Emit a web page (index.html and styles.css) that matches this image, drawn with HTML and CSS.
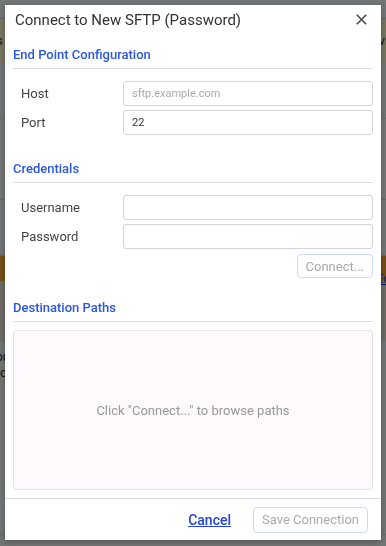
FILE: index.html
```html
<!DOCTYPE html>
<html lang="en">
<head>
    <meta charset="UTF-8">
    <meta name="viewport" content="width=device-width, initial-scale=1.0">
    <title>Connect to New SFTP</title>
    <link rel="stylesheet" href="styles.css">
</head>
<body>

    <!-- Page behind the modal -->
    <div class="page">
        <div class="page-top"></div>
        <div class="page-bar">Connections <span class="page-tab">Activity</span></div>
        <div class="page-row"></div>
        <div class="page-row tall"></div>
        <div class="page-row"></div>
        <div class="page-banner"></div>
        <div class="page-card">
            <a href="#" class="page-link">Edit</a>
        </div>
        <div class="page-text">You Sync<br>cards</div>
        <div class="page-row"></div>
    </div>

    <div class="overlay">
        <div class="dialog">
            <div class="dialog-header">
                <h1>Connect to New SFTP (Password)</h1>
                <button type="button" class="close" aria-label="Close">
                    <svg width="11" height="11" viewBox="0 0 11 11">
                        <path d="M0.8 0.8 L10.2 10.2 M10.2 0.8 L0.8 10.2" stroke="#4a4a4a" stroke-width="1.6" fill="none"/>
                    </svg>
                </button>
            </div>

            <div class="dialog-body">
                <!-- End Point Section -->
                <h2>End Point Configuration</h2>
                <div class="field">
                    <label for="host">Host</label>
                    <input type="text" id="host" placeholder="sftp.example.com">
                </div>
                <div class="field">
                    <label for="port">Port</label>
                    <input type="text" id="port" value="22">
                </div>

                <!-- Credentials Section -->
                <h2 class="gap">Credentials</h2>
                <div class="field">
                    <label for="username">Username</label>
                    <input type="text" id="username">
                </div>
                <div class="field">
                    <label for="password">Password</label>
                    <input type="password" id="password">
                </div>
                <div class="connect-row">
                    <button type="button" class="btn" disabled>Connect...</button>
                </div>

                <!-- Paths Section -->
                <h2 class="gap-sm">Destination Paths</h2>
                <div class="paths">Click "Connect..." to browse paths</div>
            </div>

            <div class="dialog-footer">
                <a href="#" class="cancel">Cancel</a>
                <button type="button" class="btn save" disabled>Save Connection</button>
            </div>
        </div>
    </div>

</body>
</html>
```

FILE: styles.css
```css
/* Basic Styles */
body {
    font-family: 'Roboto', 'Liberation Sans', sans-serif;
    margin: 0;
    padding: 0;
    background-color: #e9eef0;
    color: #333;
}

/* Page behind the modal */
.page {
    height: 546px;
    overflow: hidden;
    font-size: 13px;
}
.page-top {
    height: 18px;
    border-bottom: 1px solid #c8cdd0;
}
.page-bar {
    height: 44px;
    background-color: #f4f0c8;
    padding: 14px 0 0 0;
    box-sizing: border-box;
    display: flex;
    justify-content: space-between;
    color: #334;
    text-indent: -70px;
}
.page-tab {
    margin-right: -40px;
}
.page-row {
    height: 55px;
    border-bottom: 1px solid #cfd4d7;
}
.page-row.tall {
    height: 80px;
    background-color: #eef0f2;
}
.page-banner {
    height: 25px;
    background-color: #f0a030;
}
.page-card {
    height: 60px;
    background-color: #e2d9cc;
    text-align: right;
}
.page-link {
    color: #1a3acc;
    position: relative;
    top: -10px;
    right: -12px;
}
.page-text {
    padding: 8px 0 0 0;
    text-indent: -12px;
    line-height: 16px;
    color: #333;
    height: 130px;
}

/* Modal */
.overlay {
    position: fixed;
    inset: 0;
    background-color: rgba(0, 0, 0, 0.5);
    padding: 5px;
}
.dialog {
    background-color: #fff;
    height: 535px;
    display: flex;
    flex-direction: column;
    box-shadow: 0 2px 8px rgba(0, 0, 0, 0.3);
}
.dialog-header {
    display: flex;
    align-items: center;
    justify-content: space-between;
    padding: 0 14px 0 10px;
    height: 29px;
    flex-shrink: 0;
}
.dialog-header h1 {
    font-size: 15px;
    font-weight: 400;
    color: #333;
    margin: 0;
}
.close {
    background: none;
    border: none;
    padding: 0;
    width: 11px;
    height: 11px;
    display: flex;
}
.dialog-body {
    flex: 1;
    padding: 0 8px;
    display: flex;
    flex-direction: column;
    min-height: 0;
}
.dialog-body h2 {
    font-size: 13px;
    font-weight: 500;
    color: #2a56e0;
    margin: 13px 0 0 0;
    padding-bottom: 6px;
    border-bottom: 1px solid #ddd;
    line-height: 15px;
}
.dialog-body h2.gap {
    margin-top: 26px;
}
.dialog-body h2.gap-sm {
    margin-top: 22px;
}
.field {
    display: flex;
    align-items: center;
    margin-top: 4px;
}
.dialog-body h2 + .field {
    margin-top: 12px;
}
.field label {
    width: 110px;
    padding-left: 8px;
    box-sizing: border-box;
    font-size: 13px;
    color: #444;
}
.field input {
    flex: 1;
    height: 25px;
    box-sizing: border-box;
    border: 1px solid #d4d4d4;
    border-radius: 3px;
    padding: 0 8px;
    font-family: inherit;
    font-size: 11px;
    color: #333;
}
.field input::placeholder {
    color: #aaa;
}
.connect-row {
    display: flex;
    justify-content: flex-end;
    margin-top: 5px;
}
.btn {
    font-family: inherit;
    font-size: 13px;
    color: #aaa;
    background-color: #fff;
    border: 1px solid #cdd8fb;
    border-radius: 4px;
    height: 24px;
    padding: 0 8px;
}
.paths {
    margin-top: 8px;
    height: 160px;
    flex-shrink: 0;
    background-color: #fdf9fd;
    border: 1px solid #e3e3e3;
    border-radius: 3px;
    box-sizing: border-box;
    display: flex;
    align-items: center;
    justify-content: center;
    font-size: 13px;
    color: #999;
}
.dialog-footer {
    border-top: 1px solid #ddd;
    height: 42px;
    box-sizing: border-box;
    flex-shrink: 0;
    display: flex;
    align-items: center;
    justify-content: flex-end;
    padding: 0 13px 0 0;
    gap: 22px;
}
.cancel {
    color: #2243d6;
    font-size: 14px;
    font-weight: 500;
}
.btn.save {
    height: 26px;
    padding: 0 8px;
}
```
